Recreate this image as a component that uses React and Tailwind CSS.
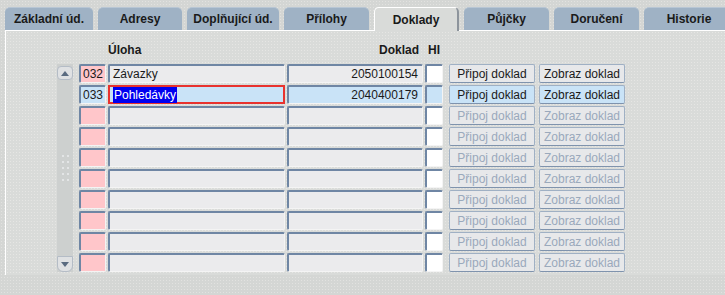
import React from 'react';

const tabs = [
    { label: 'Základní úd.', w: 'w-[88px]' },
    { label: 'Adresy', w: 'w-[84px]' },
    { label: 'Doplňující úd.', w: 'w-[92px]' },
    { label: 'Přílohy', w: 'w-[85px]' },
    { label: 'Doklady', w: 'w-[85px]', active: true },
    { label: 'Půjčky', w: 'w-[85px]' },
    { label: 'Doručení', w: 'w-[85px]' },
    { label: 'Historie', w: 'w-[90px]' },
];

const rows = [
    { kod: '032', uloha: 'Závazky', doklad: '2050100154', enabled: true },
    { kod: '033', uloha: 'Pohledávky', doklad: '2040400179', enabled: true, current: true },
    {}, {}, {}, {}, {}, {}, {}, {},
];

const cell = 'h-[19px] border-t-2 border-l-2 border-[#6f86a4] border-r border-b border-r-[#f4f4f4] border-b-[#f4f4f4] rounded-[2px] flex items-center text-[12px] leading-none';

const Button = ({ label, enabled, current }) => (
    <div
        className={`w-[86px] h-[19px] rounded-[2px] border border-[#9fb0c4] border-b-[#7f93ad] flex items-center justify-center text-[12px] leading-none ${
            current ? 'bg-[#c9e3f7]' : 'bg-[#e7e8ea]'
        } ${enabled ? 'text-[#1a1a1a]' : 'text-[#9aa9bc]'}`}
    >
        {label}
    </div>
);

const Row = ({ row }) => {
    const bg = row.current ? 'bg-[#c9e3f7]' : 'bg-[#ebebed]';
    return (
        <div className="flex items-center h-[19px]">
            <div className={`${cell} w-[27px] pl-[2px] ${row.current ? 'bg-[#c9e3f7]' : 'bg-[#ffc6ca]'}`}>{row.kod}</div>
            {row.current ? (
                <div className="ml-[2px] w-[177px] h-[19px] border-2 border-[#e8322e] bg-[#c9e3f7] flex items-center pl-[3px] text-[12px] leading-none">
                    <span className="bg-[#0000f0] text-white px-[1px] py-[2px]">{row.uloha}</span>
                </div>
            ) : (
                <div className={`${cell} ml-[2px] w-[177px] pl-[3px] ${bg}`}>{row.uloha}</div>
            )}
            <div className={`${cell} ml-[2px] w-[136px] justify-end pr-[4px] ${bg}`}>{row.doklad}</div>
            <div className={`${cell} ml-[2px] w-[18px] ${row.current ? 'bg-[#c9e3f7]' : 'bg-white'}`}></div>
            <div className="ml-[6px] flex gap-[4px]">
                <Button label="Připoj doklad" enabled={row.enabled} current={row.current} />
                <Button label="Zobraz doklad" enabled={row.enabled} current={row.current} />
            </div>
        </div>
    );
};

const App = () => {
    return (
        <div
            className="w-[725px] h-[295px] overflow-hidden bg-[#d4d6d4] bg-[radial-gradient(#e2e2e0_0.6px,transparent_0.8px)] bg-[length:3px_3px] text-[#1a1a1a]"
            style={{ fontFamily: '"Liberation Sans", Arial, sans-serif' }}
        >
            {/* zalozky */}
            <div className="flex gap-[5px] pl-[5px] pt-[7px] h-[30px]">
                {tabs.map((t) => (
                    <div
                        key={t.label}
                        className={`${t.w} shrink-0 h-[23px] rounded-t-[5px] flex items-center justify-center text-[12px] font-bold ${
                            t.active
                                ? 'bg-[#d9dbd9] border-t border-l border-white border-r-2 border-r-[#8d949c] h-[24px] relative z-10'
                                : 'bg-[#9fb2c5] border-t border-[#b8c6d4]'
                        }`}
                    >
                        {t.label}
                    </div>
                ))}
            </div>

            {/* panel */}
            <div className="ml-[5px] h-[245px] border-t border-l border-white bg-[#d9dbd9] bg-[radial-gradient(#e6e6e4_0.6px,transparent_0.8px)] bg-[length:3px_3px]">
                <div className="flex items-end h-[28px] text-[12px] font-bold">
                    <div className="ml-[102px] w-[177px]">Úloha</div>
                    <div className="ml-[2px] w-[136px] text-right pr-[4px]">Doklad</div>
                    <div className="ml-[2px] w-[18px] pl-[3px]">HI</div>
                </div>
                <div className="flex mt-[5px]">
                    {/* scrollbar */}
                    <div className="ml-[51px] w-[16px] h-[208px] bg-[#cdd0cf] flex flex-col justify-between items-center">
                        <div className="w-[16px] h-[14px] mt-[2px] rounded-[4px] border border-[#b4bcc6] bg-[#dfe1e3] flex items-center justify-center">
                            <svg width="8" height="5" viewBox="0 0 8 5"><path d="M0 5 L4 0 L8 5 Z" fill="#5a6b80" /></svg>
                        </div>
                        <div className="grid grid-cols-2 gap-x-[3px] gap-y-[4px] opacity-80">
                            {[...Array(10)].map((_, i) => (
                                <div key={i} className="w-[2px] h-[2px] bg-[#f2f4f6] rounded-full" />
                            ))}
                        </div>
                        <div className="w-[16px] h-[16px] rounded-b-[6px] border border-[#b4bcc6] bg-[#dfe1e3] flex items-center justify-center">
                            <svg width="8" height="5" viewBox="0 0 8 5"><path d="M0 0 L8 0 L4 5 Z" fill="#5a6b80" /></svg>
                        </div>
                    </div>
                    <div className="ml-[6px] flex flex-col gap-[2px]">
                        {rows.map((r, i) => (
                            <Row key={i} row={r} />
                        ))}
                    </div>
                </div>
            </div>
        </div>
    );
};

export default App;
